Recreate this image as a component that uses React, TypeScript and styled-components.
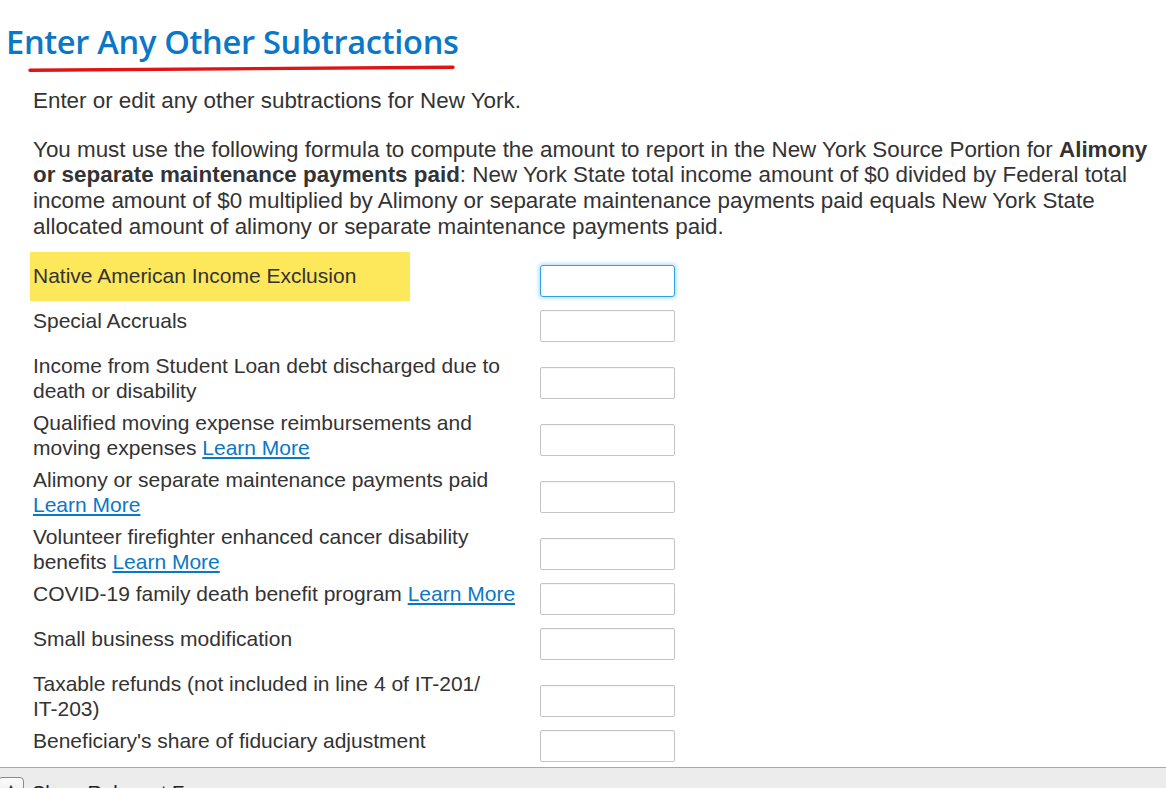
import React from "react";
import styled, { createGlobalStyle } from "styled-components";

const GlobalStyle = createGlobalStyle`
  html, body {
    margin: 0;
    padding: 0;
    background: #ffffff;
    overflow: hidden;
  }
  body {
    font-family: "Liberation Sans", Arial, sans-serif;
    color: #333333;
  }
`;

const Page = styled.div`
  display: flex;
  flex-direction: column;
  width: 1166px;
`;

const Header = styled.header`
  display: flex;
  flex-direction: column;
  padding: 22px 0 0 6px;
`;

const Title = styled.h1`
  margin: 0;
  font-family: "Open Sans", "Noto Sans", sans-serif;
  font-weight: 600;
  font-size: 32.6px;
  line-height: 40px;
  color: #0a77c7;
  letter-spacing: -0.3px;
`;

const Underline = styled.svg`
  display: block;
  margin-top: 2px;
`;

const Content = styled.main`
  display: flex;
  flex-direction: column;
  padding: 16px 10px 0 33px;
`;

const Paragraph = styled.p`
  margin: 0 0 23px 0;
  font-size: 22.4px;
  line-height: 25.7px;
  color: #333333;
  b {
    font-weight: 700;
  }
`;

const Form = styled.div`
  display: flex;
  flex-direction: column;
  gap: 6px;
`;

const Row = styled.div`
  display: grid;
  grid-template-columns: 495px 135px;
  column-gap: 12px;
  align-items: start;
`;

const Label = styled.label<{ $highlight?: boolean }>`
  position: relative;
  font-size: 21px;
  line-height: 25px;
  padding-bottom: 1px;
  color: #333333;
  z-index: 0;
  &::before {
    content: "";
    display: ${(p) => (p.$highlight ? "block" : "none")};
    position: absolute;
    left: -3px;
    top: -11px;
    width: 380px;
    height: 49px;
    background: #fde75a;
    z-index: -1;
  }
`;

const NoWrap = styled.span`
  white-space: nowrap;
`;

const Link = styled.a`
  color: #0a77c7;
  text-decoration: underline;
  cursor: pointer;
`;

const Field = styled.input<{ $focused?: boolean }>`
  align-self: end;
  box-sizing: border-box;
  width: 135px;
  height: 32px;
  margin: 2px 0 5px 0;
  border: 1px solid ${(p) => (p.$focused ? "#2aa3ea" : "#c4c4c4")};
  border-radius: ${(p) => (p.$focused ? "3px" : "2px")};
  box-shadow: ${(p) =>
    p.$focused
      ? "0 0 4px 1px rgba(60, 170, 240, 0.45)"
      : "inset 0 1px 1px rgba(0,0,0,0.04)"};
  background: #ffffff;
  outline: none;
  font-size: 18px;
  font-family: "Liberation Sans", Arial, sans-serif;
`;

const Footer = styled.footer`
  display: flex;
  align-items: flex-start;
  gap: 8px;
  height: 40px;
  border-top: 1px solid #a9a9a9;
  background: #ececec;
  padding-top: 9px;
`;

const ToggleButton = styled.button`
  width: 26px;
  height: 26px;
  margin-left: -2px;
  border: 1px solid #8a8a8a;
  border-radius: 4px;
  background: linear-gradient(#fbfbfb, #e6e6e6);
  display: flex;
  align-items: flex-start;
  justify-content: center;
  padding: 4px 0 0 0;
  font-size: 9px;
  color: #333;
`;

const FooterText = styled.span`
  margin-top: 4px;
  font-size: 20px;
  line-height: 24px;
  color: #222222;
`;

type Item = {
  label: React.ReactNode;
  key: string;
  link?: boolean;
  highlight?: boolean;
  focused?: boolean;
};

const items: Item[] = [
  { key: "nai", label: "Native American Income Exclusion", highlight: true, focused: true },
  { key: "sa", label: "Special Accruals" },
  { key: "sl", label: "Income from Student Loan debt discharged due to death or disability" },
  { key: "qm", label: "Qualified moving expense reimbursements and moving expenses", link: true },
  { key: "al", label: "Alimony or separate maintenance payments paid", link: true },
  { key: "vf", label: "Volunteer firefighter enhanced cancer disability benefits", link: true },
  { key: "cv", label: "COVID-19 family death benefit program", link: true },
  { key: "sb", label: "Small business modification" },
  {
    key: "tr",
    label: (
      <>
        Taxable refunds (not included in line 4 of <NoWrap>IT-201/</NoWrap>
        {"\u200B"}
        <NoWrap>IT-203)</NoWrap>
      </>
    ),
  },
  { key: "bs", label: "Beneficiary's share of fiduciary adjustment" },
];

export default function App() {
  return (
    <>
      <GlobalStyle />
      <Page>
        <Header>
          <Title>Enter Any Other Subtractions</Title>
          <Underline width="460" height="8" viewBox="0 0 460 8">
            <path
              d="M24 6.2 L447 3.2"
              stroke="#e01414"
              strokeWidth="3.4"
              strokeLinecap="round"
              fill="none"
            />
          </Underline>
        </Header>
        <Content>
          <Paragraph>Enter or edit any other subtractions for New York.</Paragraph>
          <Paragraph>
            You must use the following formula to compute the amount to report in the New
            York Source Portion for <b>Alimony or separate maintenance payments paid</b>: New
            York State total income amount of $0 divided by Federal total income amount of $0
            multiplied by Alimony or separate maintenance payments paid equals New York State
            allocated amount of alimony or separate maintenance payments paid.
          </Paragraph>
          <Form>
            {items.map((it) => (
              <Row key={it.key}>
                <Label $highlight={it.highlight}>
                  {it.label}
                  {it.link && (
                    <>
                      {" "}
                      <Link>Learn More</Link>
                    </>
                  )}
                </Label>
                <Field type="text" $focused={it.focused} aria-label={it.key} />
              </Row>
            ))}
          </Form>
        </Content>
        <Footer>
          <ToggleButton>▲</ToggleButton>
          <FooterText>Show Relevant Forms</FooterText>
        </Footer>
      </Page>
    </>
  );
}
